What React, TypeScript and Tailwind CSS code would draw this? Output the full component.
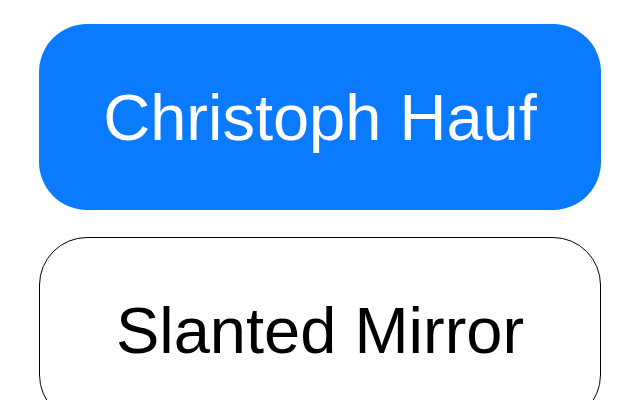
export default function App() {
  return (
    <div className="w-[640px] h-[400px] overflow-hidden bg-white flex flex-col gap-[27px] px-[39px] pt-[24px]" style={{ fontFamily: '"Liberation Sans", Arial, sans-serif' }}>
      <div className="h-[186px] shrink-0 rounded-[48px] bg-[#0a7aff] flex items-center justify-center">
        <span className="text-white text-[65px] leading-none">Christoph Hauf</span>
      </div>
      <div className="h-[186px] shrink-0 rounded-[48px] border-[1.5px] border-black bg-white flex items-center justify-center">
        <span className="text-black text-[65px] leading-none">Slanted Mirror</span>
      </div>
    </div>
  );
}
